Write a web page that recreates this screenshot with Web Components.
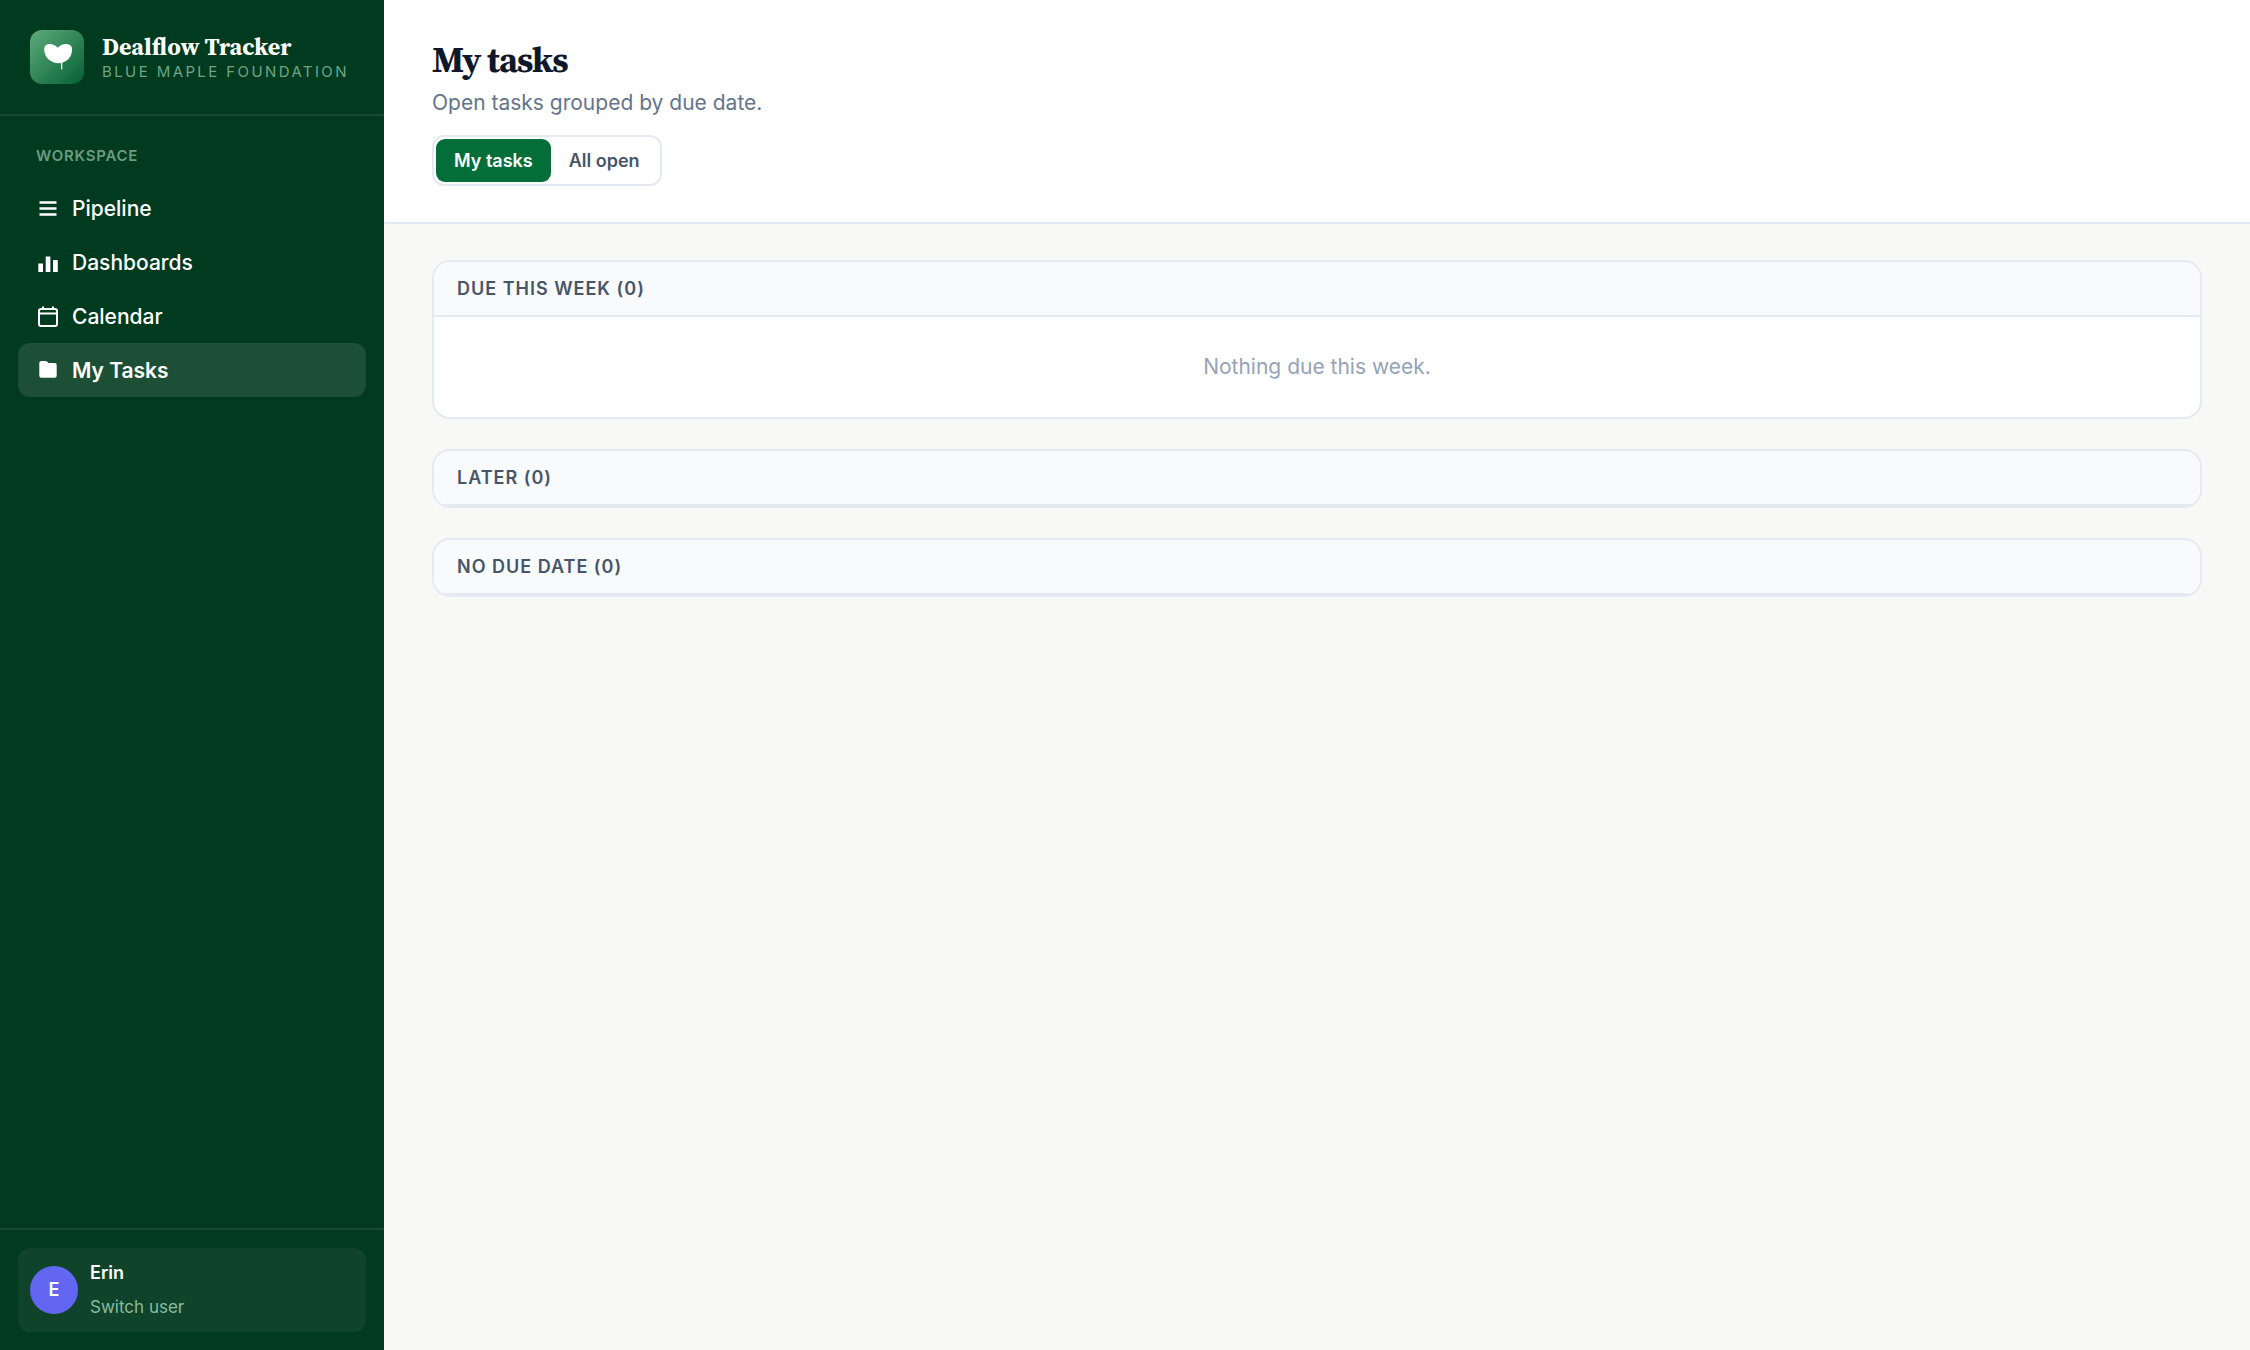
<!DOCTYPE html>
<html lang="en">
<head>
<meta charset="utf-8">
<title>Dealflow Tracker</title>
<style>
    html {
        --green-900: #003a1f;
        --green-700: #046e3a;
        --green-line: #19492f;
        --line: #e5eaf2;
        --serif: "Source Serif 4", "Source Serif Pro", "Liberation Serif", serif;
        --sans: Inter, "Liberation Sans", sans-serif;
    }

    body {
        margin: 0;
        background: #f8f8f6;
        color: #0f172a;
        font: 21px/32px var(--sans);
    }
</style>
</head>
<body>

<template id="AppShell">
    <style>
        :host {
            display: grid;
            grid-template-columns: 384px 1fr;
            min-height: 100vh;
        }

        main {
            min-width: 0;
        }
    </style>
    <slot name="sidebar"></slot>
    <main><slot></slot></main>
</template>

<template id="SideBar">
    <style>
        :host {
            display: flex;
            flex-direction: column;
            background: var(--green-900);
            color: white;
        }

        nav {
            flex: 1;
            padding: 28px 18px;
        }

        h2 {
            margin: 0 0 13px;
            padding: 0 18px;
            color: #6b9c80;
            font-size: 15px;
            font-weight: 600;
            line-height: 24px;
            letter-spacing: 0.05em;
            text-transform: uppercase;
        }

        footer {
            padding: 18px;
            border-top: 2px solid var(--green-line);
        }
    </style>
    <slot name="brand"></slot>
    <nav aria-labelledby="heading">
        <h2 id="heading">Workspace</h2>
        <slot></slot>
    </nav>
    <footer><slot name="user"></slot></footer>
</template>

<template id="BrandMark">
    <style>
        :host {
            display: flex;
            align-items: center;
            gap: 18px;
            padding: 30px;
            border-bottom: 2px solid var(--green-line);
        }

        svg {
            flex: none;
            width: 54px;
            height: 54px;
            border-radius: 12px;
            background: linear-gradient(135deg, #5fab7b, #046035);
        }

        .name {
            padding-top: 4px;
            font: 700 24px/26px var(--serif);
            white-space: nowrap;
        }

        .owner {
            color: #6fa486;
            font-size: 15px;
            line-height: 24px;
            letter-spacing: 0.16em;
            text-transform: uppercase;
            white-space: nowrap;
        }
    </style>
    <svg viewBox="0 0 54 54" aria-hidden="true">
        <path fill="white" d="M27.6 17.8C25.4 15.2 22.6 14 19.6 14C16 14 14.2 16.400 14.2 19.500C14.200 27 20.500 33.200 28.600 33.200C36.500 33.200 42 27 42 20V18C41.400 15.400 39 14 36.200 14C32.600 14 29.800 15.400 27.600 17.800Z"/>
        <path stroke="white" stroke-width="1.200" d="M31.700 32V39.500"/>
    </svg>
    <div>
        <div class="name"><slot></slot></div>
        <div class="owner"><slot name="owner"></slot></div>
    </div>
</template>

<template id="NavItem">
    <style>
        :host {
            display: block;
        }

        a {
            display: flex;
            align-items: center;
            gap: 12px;
            padding: 12px 18px 10px;
            border-radius: 12px;
            color: white;
            font-weight: 500;
            text-decoration: none;
        }

        a:hover {
            background: #0f442b;
        }

        :host([active]) a {
            background: #1c4f35;
            font-weight: 600;
        }

        ::slotted(svg) {
            flex: none;
            width: 24px;
            height: 24px;
        }
    </style>
    <a href="#"><slot name="icon"></slot><span><slot></slot></span></a>
</template>

<template id="UserCard">
    <style>
        :host {
            display: block;
        }

        button {
            display: flex;
            align-items: center;
            gap: 12px;
            box-sizing: border-box;
            width: 100%;
            padding: 8px 12px;
            border: 0;
            border-radius: 12px;
            background: #0f442b;
            color: white;
            font: inherit;
            text-align: left;
            cursor: pointer;
        }

        .avatar {
            flex: none;
            width: 48px;
            border-radius: 50%;
            background: #6366f1;
            font-size: 18px;
            font-weight: 600;
            line-height: 48px;
            text-align: center;
        }

        .name, .action {
            display: block;
            font-size: 18px;
            font-weight: 600;
            line-height: 34px;
        }

        .action {
            color: #8abb9f;
            font-size: 17px;
            font-weight: 400;
        }
    </style>
    <button type="button">
        <span class="avatar"></span>
        <span>
            <span class="name"></span>
            <span class="action">Switch user</span>
        </span>
    </button>
</template>

<template id="PageHeader">
    <style>
        :host {
            display: block;
            padding: 36px 48px;
            border-bottom: 2px solid var(--line);
            background: white;
        }

        h1 {
            margin: 0;
            font: 700 36px/48px var(--serif);
            letter-spacing: -1px;
        }

        p {
            margin: 3px 0 16px;
            color: #64748b;
        }
    </style>
    <h1><slot></slot></h1>
    <p><slot name="subtitle"></slot></p>
    <slot name="controls"></slot>
</template>

<template id="SegmentedControl">
    <style>
        :host {
            display: flex;
        }

        div {
            display: flex;
            padding: 2px;
            border: 2px solid var(--line);
            border-radius: 12px;
        }

        button {
            padding: 8px 18px;
            border: 0;
            border-radius: 9px;
            background: none;
            color: #475569;
            font: 600 18px/27px var(--sans);
            cursor: pointer;
        }

        button[aria-pressed="true"] {
            background: var(--green-700);
            color: white;
        }
    </style>
    <div role="group" aria-label="Task filter"></div>
</template>

<template id="TaskGroup">
    <style>
        :host {
            display: block;
            overflow: hidden;
            border: 2px solid var(--line);
            border-radius: 18px;
            background: white;
        }

        h2 {
            margin: 0;
            padding: 13px 23px;
            border-bottom: 2px solid var(--line);
            background: #f8fafc;
            color: #475569;
            font-size: 18px;
            font-weight: 600;
            line-height: 27px;
            letter-spacing: 1px;
            text-transform: uppercase;
        }

        ::slotted(p) {
            margin: 0;
            padding: 34px 24px;
            color: #94a3b8;
            text-align: center;
        }
    </style>
    <h2></h2>
    <slot></slot>
</template>

<template id="TaskList">
    <style>
        :host {
            display: flex;
            flex-direction: column;
            gap: 30px;
            padding: 36px 48px;
        }
    </style>
    <slot></slot>
</template>

<app-shell>
    <side-bar slot="sidebar">
        <brand-mark slot="brand">Dealflow Tracker<span slot="owner">Blue Maple Foundation</span></brand-mark>
        <nav-item>
            <svg slot="icon" viewBox="0 0 24 24" stroke="white" stroke-width="2.600"><path d="M3.500 5.500H20.500M3.500 11.500H20.500M3.500 17.500H20.500"/></svg>
            Pipeline
        </nav-item>
        <nav-item>
            <svg slot="icon" viewBox="0 0 24 24" fill="white"><path d="M2.300 12.500H7V21H2.300ZM9.700 5.500H14.400V21H9.700ZM17 9H21.800V21H17Z"/></svg>
            Dashboards
        </nav-item>
        <nav-item>
            <svg slot="icon" viewBox="0 0 24 24" fill="none" stroke="white" stroke-width="2"><rect x="3" y="4" width="18" height="17" rx="2"/><path d="M3 8.500H21M7 1.500V4M17 1.500V4"/></svg>
            Calendar
        </nav-item>
        <nav-item active>
            <svg slot="icon" viewBox="0 0 24 24" fill="white"><path d="M3.300 4Q3.300 2 5.300 2H9.500Q10.500 2 11.200 2.800L12.500 4H18.700Q20.700 4 20.700 6V16.700Q20.700 18.700 18.700 18.700H5.300Q3.300 18.700 3.300 16.700Z"/></svg>
            My Tasks
        </nav-item>
        <user-card slot="user" name="Erin"></user-card>
    </side-bar>

    <page-header>
        My tasks
        <span slot="subtitle">Open tasks grouped by due date.</span>
        <segmented-control slot="controls" options="My tasks,All open"></segmented-control>
    </page-header>
    <task-list>
        <task-group label="Due this week" count="0"><p>Nothing due this week.</p></task-group>
        <task-group label="Later" count="0"></task-group>
        <task-group label="No due date" count="0"></task-group>
    </task-list>
</app-shell>

<script>

    class TemplateElement extends HTMLElement {
        constructor() {
            super();

            const template = document.querySelector('#' + this.constructor.name);
            this.attachShadow({ mode: 'open' });
            this.shadowRoot.appendChild(template.content.cloneNode(true));
        }
    }

    class AppShell extends TemplateElement {}
    class SideBar extends TemplateElement {}
    class BrandMark extends TemplateElement {}
    class PageHeader extends TemplateElement {}
    class TaskList extends TemplateElement {}

    class NavItem extends TemplateElement {
        connectedCallback() {
            if (this.hasAttribute('active')) {
                this.shadowRoot.querySelector('a').setAttribute('aria-current', 'page');
            }
        }
    }

    class UserCard extends TemplateElement {
        connectedCallback() {
            const name = this.getAttribute('name');

            this.shadowRoot.querySelector('.avatar').textContent = name[0];
            this.shadowRoot.querySelector('.name').textContent = name;
        }
    }

    class SegmentedControl extends TemplateElement {
        connectedCallback() {
            const group = this.shadowRoot.querySelector('div');

            this.buttons = this.getAttribute('options').split(',').map(label => {
                const button = document.createElement('button');
                button.type = 'button';
                button.textContent = label;
                button.onclick = () => this.select(button);
                return button;
            });

            group.replaceChildren(...this.buttons);
            this.select(this.buttons[0]);
        }

        select(selected) {
            this.buttons.forEach(button => {
                button.setAttribute('aria-pressed', button === selected);
            });
        }
    }

    class TaskGroup extends TemplateElement {
        connectedCallback() {
            const label = this.getAttribute('label');
            const count = this.getAttribute('count');

            this.shadowRoot.querySelector('h2').textContent = `${label} (${count})`;
        }
    }

    window.customElements.define('app-shell', AppShell);
    window.customElements.define('side-bar', SideBar);
    window.customElements.define('brand-mark', BrandMark);
    window.customElements.define('nav-item', NavItem);
    window.customElements.define('user-card', UserCard);
    window.customElements.define('page-header', PageHeader);
    window.customElements.define('segmented-control', SegmentedControl);
    window.customElements.define('task-group', TaskGroup);
    window.customElements.define('task-list', TaskList);

</script>

</body>
</html>
